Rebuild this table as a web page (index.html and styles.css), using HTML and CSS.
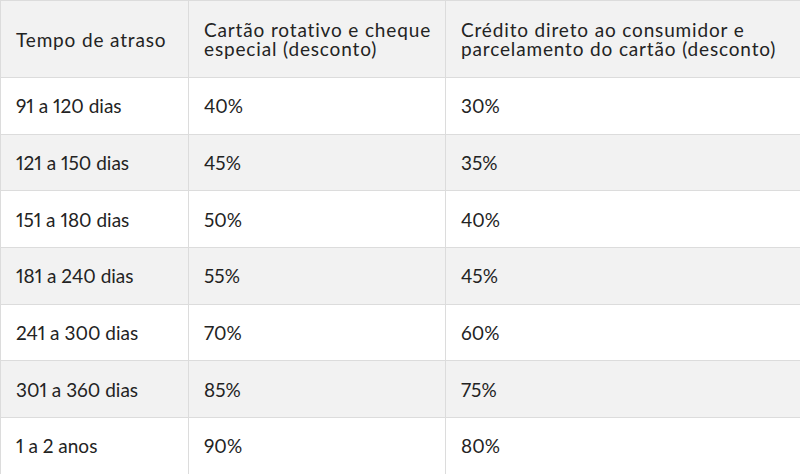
FILE: index.html
```html
<!DOCTYPE html>
<html lang="pt">
<head>
<meta charset="utf-8">
<link rel="stylesheet" href="styles.css">
</head>
<body>
<table class="tabela">
  <colgroup>
    <col class="c1">
    <col class="c2">
    <col class="c3">
  </colgroup>
  <thead>
    <tr class="cab">
      <th>Tempo de atraso</th>
      <th>Cartão rotativo e cheque especial (desconto)</th>
      <th>Crédito direto ao consumidor e parcelamento do cartão (desconto)</th>
    </tr>
  </thead>
  <tbody>
    <tr><td>91 a 120 dias</td><td>40%</td><td>30%</td></tr>
    <tr class="alt"><td>121 a 150 dias</td><td>45%</td><td>35%</td></tr>
    <tr><td>151 a 180 dias</td><td>50%</td><td>40%</td></tr>
    <tr class="alt"><td>181 a 240 dias</td><td>55%</td><td>45%</td></tr>
    <tr><td>241 a 300 dias</td><td>70%</td><td>60%</td></tr>
    <tr class="alt"><td>301 a 360 dias</td><td>85%</td><td>75%</td></tr>
    <tr><td>1 a 2 anos</td><td>90%</td><td>80%</td></tr>
  </tbody>
</table>
</body>
</html>
```
FILE: styles.css
```css
html, body {
  margin: 0;
  padding: 0;
  background: #ffffff;
}

.tabela {
  width: 800px;
  height: 474px;
  border-collapse: collapse;
  table-layout: fixed;
  font-family: Lato, "Open Sans", sans-serif;
  font-size: 19px;
  color: #232323;
  font-variant-numeric: proportional-nums;
}

.c1 { width: 188px; }
.c2 { width: 257px; }
.c3 { width: 355px; }

.tabela th,
.tabela td {
  border: 1px solid #dcdcdc;
  padding: 0 8px 0 15px;
  text-align: left;
  vertical-align: middle;
  font-weight: normal;
  line-height: 19px;
}

.tabela th {
  letter-spacing: 0.85px;
}

.cab {
  height: 77px;
  background: #f2f2f2;
}

.tabela tbody tr {
  height: 56.7px;
}

.alt {
  background: #f2f2f2;
}
```
